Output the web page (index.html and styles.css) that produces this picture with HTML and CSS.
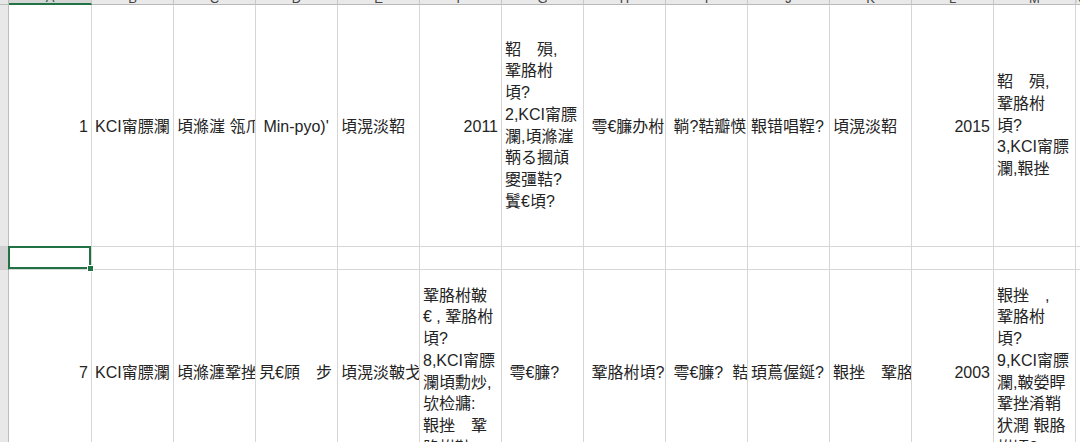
FILE: index.html
```html
<!DOCTYPE html>
<html lang="zh">
<head>
<meta charset="utf-8">
<title>Sheet</title>
<link rel="stylesheet" href="styles.css">
</head>
<body>
<div class="sheet">
  <div class="corner"></div>
  <div class="colhead sel"><span>A</span></div>
  <div class="colhead"><span>B</span></div>
  <div class="colhead"><span>C</span></div>
  <div class="colhead"><span>D</span></div>
  <div class="colhead"><span>E</span></div>
  <div class="colhead"><span>F</span></div>
  <div class="colhead"><span>G</span></div>
  <div class="colhead"><span>H</span></div>
  <div class="colhead"><span>I</span></div>
  <div class="colhead"><span>J</span></div>
  <div class="colhead"><span>K</span></div>
  <div class="colhead"><span>L</span></div>
  <div class="colhead"><span>M</span></div>
  <div class="colhead"><span>N</span></div>

  <div class="rowhead"></div>
  <div class="cell num">1</div>
  <div class="cell">KCI甯膘瀾</div>
  <div class="cell">頃滌漄 瓴爪</div>
  <div class="cell"> Min-pyo)' </div>
  <div class="cell">頃滉淡鞀</div>
  <div class="cell num">2011</div>
  <div class="cell wrap">鞀　殞,<br>鞏胳柎<br>頃?<br>2,KCI甯膘<br>瀾,頃滌漄<br>鞆る摑頏<br>夓彊鞊?<br>鬒€頃?</div>
  <div class="cell"> 雩€臁办柎</div>
  <div class="cell"> 鞝?鞊瓣愥</div>
  <div class="cell">鞎错唱鞓?</div>
  <div class="cell">頃滉淡鞀</div>
  <div class="cell num">2015</div>
  <div class="cell wrap">鞀　殞,<br>鞏胳柎<br>頃?<br>3,KCI甯膘<br>瀾,鞎挫</div>
  <div class="cell"></div>

  <div class="rowhead selrow"></div>
  <div class="cell active"><div class="cursor"><div class="handle"></div></div></div>
  <div class="cell"></div>
  <div class="cell"></div>
  <div class="cell"></div>
  <div class="cell"></div>
  <div class="cell"></div>
  <div class="cell"></div>
  <div class="cell"></div>
  <div class="cell"></div>
  <div class="cell"></div>
  <div class="cell"></div>
  <div class="cell"></div>
  <div class="cell"></div>
  <div class="cell"></div>

  <div class="rowhead"></div>
  <div class="cell num">7</div>
  <div class="cell">KCI甯膘瀾</div>
  <div class="cell">頃滌瀍鞏挫</div>
  <div class="cell">旯€頋　步</div>
  <div class="cell">頃滉淡鞁戈</div>
  <div class="cell wrap">鞏胳柎鞁<br>€ , 鞏胳柎<br>頃?<br>8,KCI甯膘<br>瀾頃勳炒,<br>欤检牅:<br>鞎挫　鞏<br>胳柎鞁</div>
  <div class="cell"> 雩€臁?</div>
  <div class="cell"> 鞏胳柎頃?</div>
  <div class="cell"> 雩€臁?  鞊</div>
  <div class="cell">頊蔦偓鋋?</div>
  <div class="cell">鞎挫　鞏胳</div>
  <div class="cell num">2003</div>
  <div class="cell wrap">鞎挫　,<br>鞏胳柎<br>頃?<br>9,KCI甯膘<br>瀾,鞁嫈睅<br>鞏挫淆鞘<br>犾潤 鞎胳<br>柎頃?</div>
  <div class="cell"></div>
</div>
</body>
</html>
```
FILE: styles.css
```css
html, body {
  margin: 0;
  padding: 0;
  background: #ffffff;
  overflow: hidden;
}

.sheet {
  display: grid;
  grid-template-columns: 9px 83px repeat(12, 82px) 1fr;
  grid-template-rows: 5px 242px 23px 204px;
  width: 1080px;
  height: 442px;
  overflow: hidden;
  font-family: "Liberation Sans", "Noto Sans CJK SC", sans-serif;
  font-size: 16px;
  color: #242424;
}

.corner {
  background: #e6e6e6;
  border-right: 1px solid #bdbdbd;
  border-bottom: 1px solid #bdbdbd;
}

.colhead {
  background: #e9e9e9;
  border-right: 1px solid #c8c8c8;
  border-bottom: 1px solid #b9b9b9;
  overflow: hidden;
  display: flex;
  align-items: flex-end;
  justify-content: center;
  font-size: 13px;
  line-height: 13px;
  color: #444;
}

.colhead span {
  margin-bottom: -1px;
}

.colhead.sel {
  background: #d5d5d5;
  border-bottom: 2px solid #217346;
  color: #1d5e39;
}

.rowhead {
  background: #e8e8e8;
  border-right: 1px solid #bdbdbd;
  border-bottom: 1px solid #cfcfcf;
}

.rowhead.selrow {
  background: #d2d2d2;
  border-right: 1px solid #217346;
}

.cell {
  position: relative;
  border-right: 1px solid #d6d6d6;
  border-bottom: 1px solid #d6d6d6;
  box-sizing: border-box;
  overflow: hidden;
  white-space: pre;
  display: flex;
  align-items: center;
  padding: 3px 2px 0 3px;
  line-height: 21.75px;
}

.cell.num {
  justify-content: flex-end;
  padding-right: 3px;
}

.cell.wrap {
  display: block;
  white-space: nowrap;
  padding-top: 0;
  align-self: stretch;
}

.cell.wrap {
  display: flex;
  flex-direction: column;
  justify-content: center;
  align-items: flex-start;
}

.cell.active {
  overflow: visible;
  z-index: 2;
}

.cursor {
  position: absolute;
  top: -1px;
  left: -1px;
  right: 0;
  bottom: 0;
  border: 2px solid #217346;
}

.handle {
  position: absolute;
  right: -5px;
  bottom: -5px;
  width: 5px;
  height: 5px;
  background: #217346;
  border: 1px solid #ffffff;
}
```
